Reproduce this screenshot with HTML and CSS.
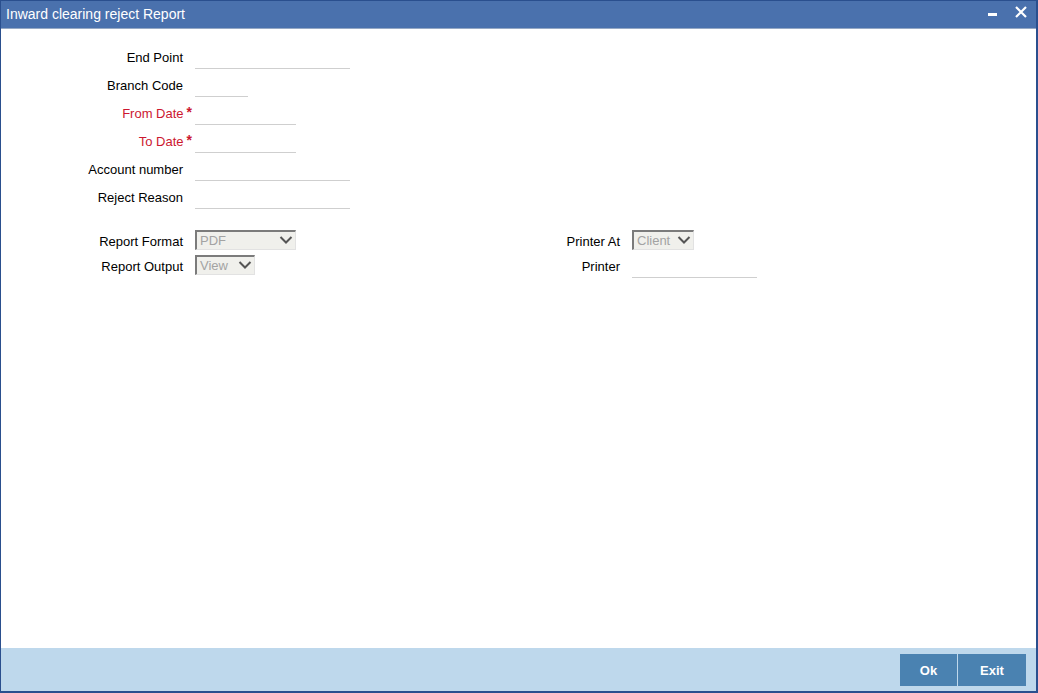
FILE: index.html
```html
<!DOCTYPE html>
<html lang="en">
<head>
    <meta charset="UTF-8">
    <title>Inward clearing reject Report</title>
    <link rel="stylesheet" href="styles.css">
</head>
<body>
    <div class="window">
        <div class="titlebar">
            <span class="title">Inward clearing reject Report</span>
            <div class="controls">
                <svg width="12" height="12" viewBox="0 0 12 12"><rect x="1" y="7" width="9" height="3" fill="#fff"/></svg>
                <svg width="14" height="14" viewBox="0 0 14 14"><path d="M2 2 L12 12 M12 2 L2 12" stroke="#fff" stroke-width="2.2" fill="none"/></svg>
            </div>
        </div>

        <div class="content">
            <div class="fields">
                <label>End Point</label>
                <div class="field"><input type="text" class="w-long"></div>

                <label>Branch Code</label>
                <div class="field"><input type="text" class="w-short"></div>

                <label class="req">From Date<span class="star">*</span></label>
                <div class="field"><input type="text" class="w-mid"></div>

                <label class="req">To Date<span class="star">*</span></label>
                <div class="field"><input type="text" class="w-mid"></div>

                <label>Account number</label>
                <div class="field"><input type="text" class="w-long"></div>

                <label>Reject Reason</label>
                <div class="field"><input type="text" class="w-long"></div>
            </div>

            <div class="report">
                <label>Report Format</label>
                <div class="field">
                    <div class="select sel-format"><span>PDF</span>
                        <svg width="14" height="10" viewBox="0 0 14 10"><path d="M1.5 2 L7 7.5 L12.5 2" stroke="#555" stroke-width="2" fill="none"/></svg>
                    </div>
                </div>
                <label>Printer At</label>
                <div class="field">
                    <div class="select sel-client"><span>Client</span>
                        <svg width="14" height="10" viewBox="0 0 14 10"><path d="M1.5 2 L7 7.5 L12.5 2" stroke="#555" stroke-width="2" fill="none"/></svg>
                    </div>
                </div>

                <label>Report Output</label>
                <div class="field">
                    <div class="select sel-view"><span>View</span>
                        <svg width="14" height="10" viewBox="0 0 14 10"><path d="M1.5 2 L7 7.5 L12.5 2" stroke="#555" stroke-width="2" fill="none"/></svg>
                    </div>
                </div>
                <label>Printer</label>
                <div class="field"><input type="text" class="w-printer"></div>
            </div>
        </div>

        <div class="footer">
            <button class="btn btn-ok">Ok</button>
            <button class="btn btn-exit">Exit</button>
        </div>
    </div>
</body>
</html>
```

FILE: styles.css
```css
html, body {
    margin: 0;
    padding: 0;
}
body {
    font-family: "Liberation Sans", Arial, sans-serif;
    font-size: 13px;
    color: #000;
    background: #fff;
}
.window {
    width: 1038px;
    height: 693px;
    box-sizing: border-box;
    border-left: 1px solid #2a4f8e;
    border-top: 1px solid #2a4f8e;
    border-right: 2px solid #2a4f8e;
    border-bottom: 2px solid #2a4f8e;
    display: flex;
    flex-direction: column;
}
.titlebar {
    height: 27px;
    background: #4a71ad;
    border-bottom: 1px solid #95a8c4;
    display: flex;
    align-items: center;
    justify-content: space-between;
    padding: 0 8px 0 5px;
    color: #fff;
}
.title {
    font-size: 14px;
    margin-top: -2px;
}
.controls {
    display: flex;
    align-items: center;
    gap: 15px;
    margin-top: -6px;
}
.content {
    flex: 1;
    padding-top: 14px;
}
.fields {
    display: grid;
    grid-template-columns: 182px auto;
    column-gap: 12px;
    grid-auto-rows: 28px;
}
label {
    text-align: right;
    display: flex;
    align-items: center;
    justify-content: flex-end;
    white-space: nowrap;
}
.req {
    color: #cc1730;
}
.star {
    color: #cc1730;
    font-size: 14px;
    font-weight: bold;
    margin-right: -9px;
    margin-left: 3px;
    align-self: flex-start;
    margin-top: 5px;
}
.field {
    display: flex;
    align-items: center;
}
input {
    height: 22px;
    box-sizing: border-box;
    border: none;
    border-bottom: 1px solid #cfcfcf;
    padding: 0 3px;
    font: inherit;
    outline: none;
    margin-top: 2px;
}
.w-long { width: 155px; }
.w-short { width: 53px; }
.w-mid { width: 101px; }
.w-printer { width: 125px; }

.report {
    display: grid;
    grid-template-columns: 182px 293px 120px auto;
    column-gap: 12px;
    grid-auto-rows: 25px;
    margin-top: 16px;
}
.report label {
    padding-top: 3px;
}
.report input {
    margin-top: 4px;
}
.select {
    height: 20px;
    box-sizing: border-box;
    border-top: 2px solid #7b7b7b;
    border-left: 2px solid #7b7b7b;
    border-right: 1px solid #e2e2e2;
    border-bottom: 1px solid #e2e2e2;
    background: #f0f0ec;
    color: #a3a3a3;
    display: flex;
    align-items: center;
    justify-content: space-between;
    padding: 0 2px 0 3px;
}
.sel-format { width: 101px; }
.sel-view { width: 60px; }
.sel-client { width: 62px; }

.footer {
    height: 43px;
    background: #bed8ec;
    display: flex;
    justify-content: flex-end;
    align-items: flex-start;
    padding: 6px 10px 0 0;
    box-sizing: border-box;
    gap: 1px;
}
.btn {
    height: 32px;
    background: #4a82b1;
    color: #fff;
    border: none;
    font-family: "Liberation Sans", Arial, sans-serif;
    font-size: 13px;
    font-weight: bold;
    padding: 0;
}
.btn-ok { width: 57px; }
.btn-exit { width: 68px; }
```
